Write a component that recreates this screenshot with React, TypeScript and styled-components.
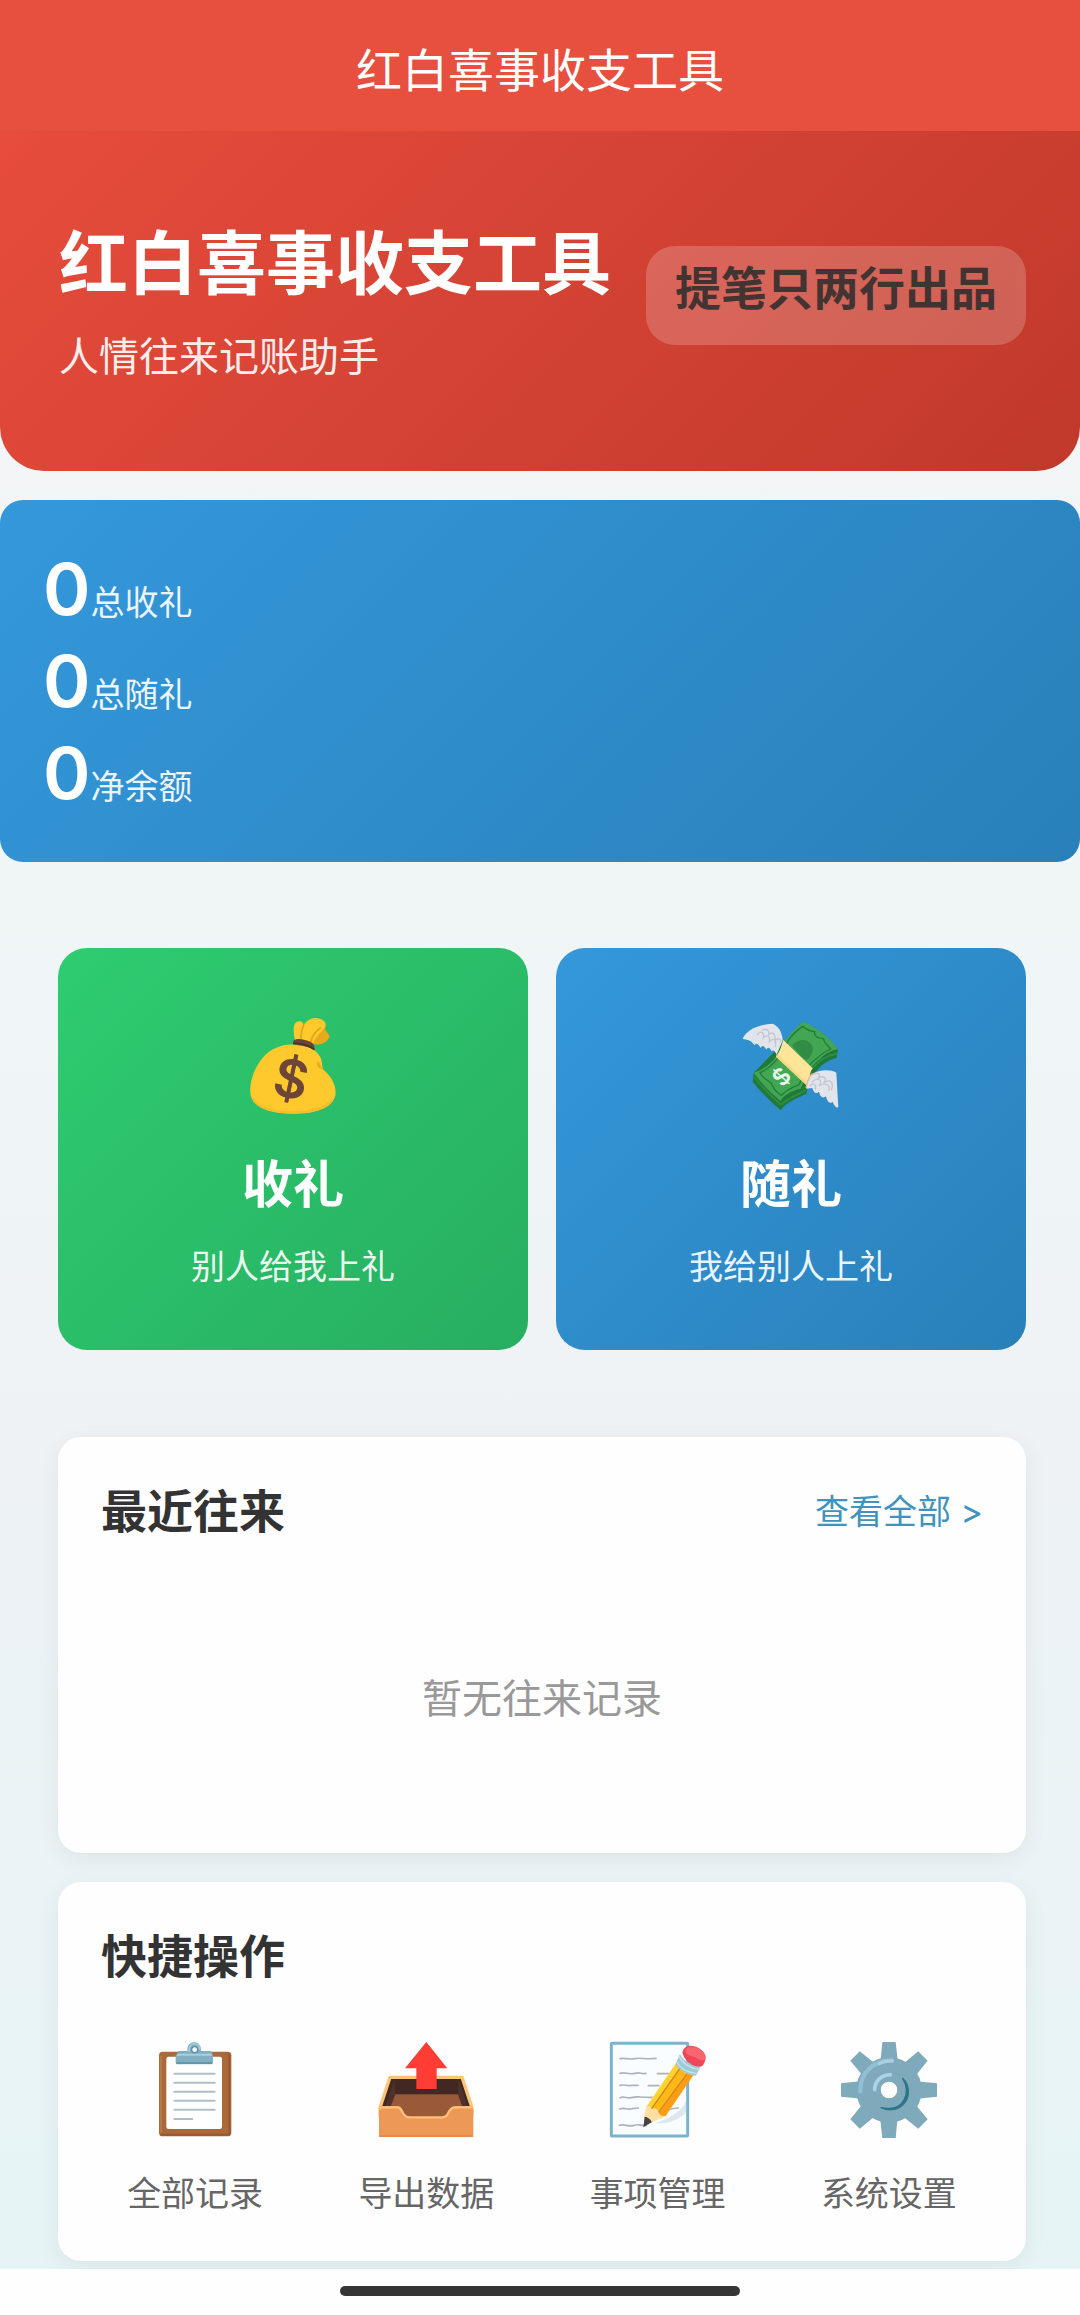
import React from "react";
import styled, { createGlobalStyle } from "styled-components";

const GlobalStyle = createGlobalStyle`
  *, *::before, *::after { box-sizing: border-box; }
  body {
    margin: 0;
    background: #fefefe;
    font-family: "Noto Sans CJK SC", "Noto Sans", sans-serif;
    color: #333;
  }
  h1, h2, p { margin: 0; }
  button { font: inherit; border: 0; cursor: pointer; }
`;

const TopBar = styled.header`
  padding: 37px 0 34px;
  background: #e74f3e;
  color: #fff;
  font-size: 46px;
  line-height: 60px;
  text-align: center;
`;

const Page = styled.main`
  padding-bottom: 8px;
  background: linear-gradient(180deg, #f5f5f6 0%, #f0f6f6 35%, #eef2f5 62%, #e6f4f6 100%);
  overflow: hidden;
`;

const Hero = styled.section`
  display: flex;
  align-items: center;
  justify-content: space-between;
  gap: 28px;
  padding: 85px 54px 97px 59px;
  border-radius: 0 0 44px 44px;
  background: linear-gradient(135deg, #e74c3c, #c0392b);
`;

const HeroText = styled.div`
  display: flex;
  flex-direction: column;
  gap: 32px;
  color: #fff;
`;

const HeroTitle = styled.h1`
  font-size: 69px;
  font-weight: 700;
  line-height: 86px;
`;

const HeroSubtitle = styled.p`
  font-size: 40px;
  line-height: 40px;
  opacity: 0.9;
`;

const Badge = styled.div`
  flex: none;
  padding: 11px 29px 32px;
  border-radius: 29px;
  background: rgba(255, 255, 255, 0.22);
  font-size: 46px;
  font-weight: 700;
  line-height: 56px;
  opacity: 0.9;
`;

const Stats = styled.dl`
  margin: 29px 0 0;
  padding: 43px;
  border-radius: 23px;
  background: linear-gradient(135deg, #3498db, #2980b9);
  color: #fff;
`;

const StatRow = styled.div`
  display: flex;
  flex-direction: row-reverse;
  justify-content: flex-end;
  align-items: baseline;
  height: 92px;
  line-height: 92px;
`;

const StatValue = styled.dd`
  margin: 0;
  font-family: Inter, "Noto Sans CJK SC", sans-serif;
  font-size: 72px;
  font-weight: 600;
`;

const StatLabel = styled.dt`
  font-size: 34px;
  opacity: 0.9;
`;

const Content = styled.div`
  display: flex;
  flex-direction: column;
  gap: 29px;
  padding: 86px 54px 0 58px;
`;

const Actions = styled.div`
  display: grid;
  grid-template-columns: 1fr 1fr;
  gap: 28px;
  margin-bottom: 58px;
`;

const ActionCard = styled.button<{ $from: string; $to: string }>`
  display: flex;
  flex-direction: column;
  align-items: center;
  padding: 70px 28px 60px;
  border-radius: 29px;
  background: linear-gradient(135deg, ${(p) => p.$from}, ${(p) => p.$to});
  color: #fff;
`;

const Icon = styled.svg`
  display: block;
  width: 96px;
  height: 96px;
  overflow: visible;
`;

const ActionTitle = styled.span`
  margin-top: 32px;
  font-size: 51px;
  font-weight: 700;
  line-height: 70px;
`;

const ActionHint = styled.span`
  margin-top: 24px;
  font-size: 34px;
  line-height: 50px;
  opacity: 0.9;
`;

const Card = styled.section`
  padding: 43px;
  border-radius: 23px;
  background: #fefefe;
  box-shadow: 0 6px 24px rgba(0, 0, 0, 0.06);
`;

const CardHeader = styled.div`
  display: flex;
  align-items: center;
  justify-content: space-between;
`;

const CardTitle = styled.h2`
  font-size: 46px;
  font-weight: 700;
  line-height: 56px;
`;

const MoreLink = styled.a`
  padding-top: 8px;
  color: #3f93bd;
  font-family: Inter, "Noto Sans CJK SC", sans-serif;
  font-size: 34px;
  line-height: 48px;
  text-decoration: none;
`;

const Empty = styled.p`
  margin-top: 47px;
  padding: 85px 0 86px;
  color: #999;
  font-size: 40px;
  line-height: 56px;
  text-align: center;
`;

const QuickGrid = styled.nav`
  display: grid;
  grid-template-columns: repeat(4, 1fr);
  gap: 43px;
  margin-top: 61px;
`;

const QuickButton = styled.button`
  display: flex;
  flex-direction: column;
  align-items: center;
  gap: 28px;
  padding: 0;
  background: none;
  color: #666;
  font-size: 34px;
  line-height: 52px;
  white-space: nowrap;
`;

const HomeBar = styled.footer`
  display: flex;
  justify-content: center;
  padding: 17px 0;
  background: #fefefe;
`;

const HomeIndicator = styled.div`
  width: 37%;
  height: 10px;
  border-radius: 5px;
  background: #353535;
`;

const MoneyBagIcon = () => (
  <Icon viewBox="75 86 288 288" aria-hidden="true">
    <path d="M284 94C310 88 322 104 315 121L329 139C326 160 298 169 279 164Z" fill="#e8a91a" />
    <path d="M226 157C218 127 218 95 238 96C246 96 250 101 251 108C265 84 294 80 311 94C323 105 313 119 302 129C291 140 284 151 278 166Z" fill="#fdc92c" />
    <path d="M251 106C246 120 242 132 243 147M301 116C286 127 276 142 272 157" fill="none" stroke="#e5a31b" strokeWidth="5" strokeLinecap="round" />
    <path d="M222 166C190 163 151 177 128 205C101 237 88 281 91 311C95 351 142 373 218 373C287 374 338 356 346 318C351 290 332 259 312 243C303 235 311 214 296 196C286 183 276 176 264 172Z" fill="#fdc92d" />
    <path d="M292 216C303 222 300 233 309 241C296 239 287 226 292 216Z" fill="#e7aa20" />
    <path d="M92 317C98 351 142 371 218 373C287 374 338 356 346 318C324 350 278 366 215 366C158 366 113 351 92 317Z" fill="#f8bd29" />
    <path d="M219 164C217 148 237 147 254 152C273 156 286 162 284 182C267 171 242 168 219 164Z" fill="#6b4335" />
    <path d="M220 163C240 160 269 170 283 181" fill="none" stroke="#51302a" strokeWidth="5" />
    <g transform="rotate(12 214 267)">
      <path d="M214 194V340" stroke="#6d4638" strokeWidth="12" />
      <text x="214" y="325" textAnchor="middle" fontFamily="Inter, sans-serif" fontWeight="600" fontSize="158" fill="#6d4638">$</text>
    </g>
  </Icon>
);

const FlyingMoneyIcon = () => (
  <Icon viewBox="69 86 288 288" aria-hidden="true">
    <path d="M101 251L98 278C120 306 149 334 183 363C194 341 224 330 259 313C275 240 317 214 350 205L354 180L250 97Z" fill="#1f7a37" />
    <path d="M250 97C227 113 215 132 196 151C179 197 149 235 101 250C124 283 151 309 182 335C189 318 214 304 242 298C257 264 271 227 300 209C317 193 331 184 354 180C329 144 289 113 250 97Z" fill="#43a653" />
    <path d="M248 111C232 122 217 135 204 154C183 202 157 233 120 250C128 266 136 270 147 276C162 285 155 294 170 307C179 314 180 318 184 318C198 301 219 293 237 286C252 249 273 217 295 203C307 193 320 184 332 179C320 164 309 162 311 148C288 145 282 138 284 127C268 127 258 120 248 111Z" fill="none" stroke="#217e3a" strokeWidth="4" />
    <path d="M216 169C231 148 260 145 275 166C286 184 271 201 261 213C246 205 233 190 216 169Z" fill="#338c45" />
    <path d="M103 264C126 292 152 320 183 346C203 326 230 319 257 302M277 237C298 211 321 198 352 193" fill="none" stroke="#318d45" strokeWidth="5" />
    <path d="M190 152L278 237C268 250 269 271 258 286L168 202C181 186 184 169 190 152Z" fill="#ffe49a" />
    <path d="M171 194L260 279L258 286L168 202Z" fill="#f7d784" />
    <path d="M68 148C79 123 112 106 158 103C178 111 188 135 188 153L170 196C164 183 158 181 155 186C148 172 143 173 139 181C130 165 125 169 122 176C113 159 106 162 104 168C92 149 81 153 68 148Z" fill="#e1e4ea" />
    <path d="M112 136C123 120 134 132 130 146C143 133 151 143 148 157C161 143 170 151 166 171M127 122C143 116 150 126 145 138C158 121 168 139 165 154C174 144 184 148 182 158" fill="none" stroke="#c3c6cf" strokeWidth="4" strokeLinecap="round" />
    <path d="M275 255C295 242 329 238 349 250L355 354C347 356 342 347 338 337C327 348 319 330 318 321C306 331 298 315 297 307C286 318 279 304 277 296L259 298C256 277 261 259 275 255Z" fill="#e1e4ea" />
    <path d="M276 257C296 244 305 258 293 267C314 255 322 269 311 280C331 267 343 280 334 301M277 277C296 261 310 275 297 289C317 277 330 287 327 303M270 290C279 278 290 285 286 300" fill="none" stroke="#c3c6cf" strokeWidth="4" strokeLinecap="round" />
    <path d="M278 253C262 264 263 281 258 296" fill="none" stroke="#f4ae7a" strokeWidth="4" />
    <g transform="rotate(-48 184 262)">
      <text x="184" y="287" textAnchor="middle" fontFamily="Inter, sans-serif" fontWeight="600" fontSize="70" fill="#e4f7e8">$</text>
    </g>
  </Icon>
);

const ClipboardIcon = () => (
  <Icon viewBox="21 68 288 288" aria-hidden="true">
    <rect x="57" y="97" width="217" height="254" rx="11" fill="#aa693a" />
    <path d="M268 102V340Q268 346 262 346H62" fill="none" stroke="#985a31" strokeWidth="6" />
    <path d="M63 110V340" stroke="#c0804c" strokeWidth="4" />
    <rect x="79" y="112" width="167" height="217" rx="7" fill="#fff" />
    <path d="M103 163H224M103 190H224M103 217H224M103 244H224M103 271H224M103 299H157" stroke="#b0bec5" strokeWidth="6" strokeLinecap="round" />
    <path d="M113 104V99Q113 95 120 95H142V91C142 61 183 62 183 91V95H211Q217 96 217 102V105L219 107V127Q219 135 211 135H114Q107 135 107 127V107Z" fill="#82aec0" />
    <path d="M111 106H215" stroke="#a9d0de" strokeWidth="6" />
    <path d="M109 131H217" stroke="#568fa9" strokeWidth="5" />
    <path d="M147 98C143 65 181 67 179 92" fill="none" stroke="#a5cfdd" strokeWidth="5" />
    <circle cx="164" cy="91" r="9" fill="#fff" stroke="#5791a8" strokeWidth="4" />
  </Icon>
);

const OutboxIcon = () => (
  <Icon viewBox="714 68 288 288" aria-hidden="true">
    <path d="M750 174H966L996 265V290H720V265Z" fill="#412823" stroke="#ffc477" strokeWidth="10" strokeLinejoin="round" />
    <path d="M763 225H956L970 270V300H746V270Z" fill="#9a5938" />
    <path d="M763 180L737 260L750 266L766 226ZM956 180L982 260L969 266L954 226Z" fill="#51322a" />
    <path d="M717 268Q717 260 726 260H772C788 260 786 274 794 285Q800 294 808 294H908C925 294 925 279 932 268Q936 260 947 260H992Q1000 261 1000 269V353H717Z" fill="#ee9858" />
    <path d="M720 268Q720 264 727 264H771C785 264 784 277 792 286Q799 294 808 294H908C925 294 923 278 932 270Q937 264 947 264H996" fill="none" stroke="#ffc078" strokeWidth="7" strokeLinecap="round" />
    <path d="M720 350H998" stroke="#e58746" strokeWidth="5" />
    <path d="M859 68L922 147H890V209H829V147H795Z" fill="#ff3d35" />
  </Icon>
);

const MemoIcon = () => (
  <Icon viewBox="60 68 288 288" aria-hidden="true">
    <rect x="64" y="72" width="229" height="278" rx="2" fill="#fafdff" stroke="#7cb3cb" strokeWidth="9" />
    <g fill="none" stroke="#adb3bb" strokeWidth="5" strokeLinecap="round">
      <path d="M90 118C108 114 113 122 134 118S166 121 198 117" />
      <path d="M90 162C106 157 115 167 135 162S151 166 168 162M202 163H239" />
      <path d="M90 198C105 194 111 201 124 198H144M175 199H207" />
      <path d="M90 235C105 230 112 239 129 234S151 236 191 234" />
      <path d="M89 269C104 263 112 273 126 268L145 266M239 269L265 266" />
      <path d="M88 318C105 312 113 324 132 318S150 322 169 318" />
    </g>
    <path d="M195 312C243 294 274 278 288 244L288 280C267 301 231 315 195 312Z" fill="#dde7ef" />
    <path d="M258 132L309 166L222 294Q191 304 163 322Q159 288 170 260Z" fill="#ffe0a1" />
    <path d="M258 132L275 140L186 270C184 259 173 257 170 263Z" fill="#ffd22e" />
    <path d="M275 140L298 154L207 280C204 267 191 263 184 270Z" fill="#ffb917" />
    <path d="M298 154L314 162L227 290C220 291 208 289 207 280Z" fill="#fc9e15" />
    <path d="M275 140L185 268M298 154L206 279" fill="none" stroke="#d78423" strokeWidth="4" />
    <path d="M164 292C172 292 185 302 185 309L160 324Z" fill="#444349" />
    <path d="M270 104C281 129 309 139 334 137L318 169C290 168 264 150 257 133Z" fill="#9dcbd6" />
    <path d="M267 111C279 134 305 149 329 150M260 127C270 148 295 159 320 163" fill="none" stroke="#c9e4e8" strokeWidth="4" />
    <path d="M277 100C282 77 303 75 326 86C347 99 354 115 338 139C316 149 284 128 277 100Z" fill="#ef4757" />
    <path d="M286 94C291 78 313 79 327 89C343 101 352 110 344 122C336 127 323 117 312 112C300 109 289 107 286 94Z" fill="#fa6670" />
  </Icon>
);

const GEAR_ANGLES = [0, 45, 90, 135, 180, 225, 270, 315];

const GearIcon = () => (
  <Icon viewBox="753 68 288 288" aria-hidden="true">
    {GEAR_ANGLES.map((angle) => (
      <path key={angle} d="M877 68H917L924 132H871Z" fill="#7faabc" transform={`rotate(${angle} 897 212)`} />
    ))}
    <circle cx="897" cy="212" r="62" fill="none" stroke="#7faabc" strokeWidth="72" />
    <circle cx="897" cy="212" r="42" fill="none" stroke="#7faabc" strokeWidth="34" />
    <path d="M811 216C809 164 849 122 906 124" fill="none" stroke="#91bfd5" strokeWidth="13" strokeLinecap="round" />
    <path d="M868 133Q886 123 907 125" fill="none" stroke="#a8d0e2" strokeWidth="10" strokeLinecap="round" />
    <path d="M854 211C855 184 874 167 901 166" fill="none" stroke="#a9d4e8" strokeWidth="11" strokeLinecap="round" />
    <path d="M938 177C981 220 938 294 873 265C942 279 964 223 938 177Z" fill="#2f7588" stroke="#2f7588" strokeWidth="4" strokeLinejoin="round" />
  </Icon>
);

const stats = [
  { label: "总收礼", value: 0 },
  { label: "总随礼", value: 0 },
  { label: "净余额", value: 0 },
];

const quickActions = [
  { label: "全部记录", Glyph: ClipboardIcon },
  { label: "导出数据", Glyph: OutboxIcon },
  { label: "事项管理", Glyph: MemoIcon },
  { label: "系统设置", Glyph: GearIcon },
];

export default function App() {
  return (
    <>
      <GlobalStyle />
      <TopBar>红白喜事收支工具</TopBar>
      <Page>
        <Hero>
          <HeroText>
            <HeroTitle>红白喜事收支工具</HeroTitle>
            <HeroSubtitle>人情往来记账助手</HeroSubtitle>
          </HeroText>
          <Badge>提笔只两行出品</Badge>
        </Hero>

        <Stats>
          {stats.map((s) => (
            <StatRow key={s.label}>
              <StatLabel>{s.label}</StatLabel>
              <StatValue>{s.value}</StatValue>
            </StatRow>
          ))}
        </Stats>

        <Content>
          <Actions>
            <ActionCard type="button" $from="#2ecc71" $to="#27ae60">
              <MoneyBagIcon />
              <ActionTitle>收礼</ActionTitle>
              <ActionHint>别人给我上礼</ActionHint>
            </ActionCard>
            <ActionCard type="button" $from="#3498db" $to="#2980b9">
              <FlyingMoneyIcon />
              <ActionTitle>随礼</ActionTitle>
              <ActionHint>我给别人上礼</ActionHint>
            </ActionCard>
          </Actions>

          <Card>
            <CardHeader>
              <CardTitle>最近往来</CardTitle>
              <MoreLink href="#records">查看全部 &gt;</MoreLink>
            </CardHeader>
            <Empty>暂无往来记录</Empty>
          </Card>

          <Card>
            <CardTitle>快捷操作</CardTitle>
            <QuickGrid aria-label="快捷操作">
              {quickActions.map(({ label, Glyph }) => (
                <QuickButton type="button" key={label}>
                  <Glyph />
                  {label}
                </QuickButton>
              ))}
            </QuickGrid>
          </Card>
        </Content>
      </Page>
      <HomeBar>
        <HomeIndicator />
      </HomeBar>
    </>
  );
}
